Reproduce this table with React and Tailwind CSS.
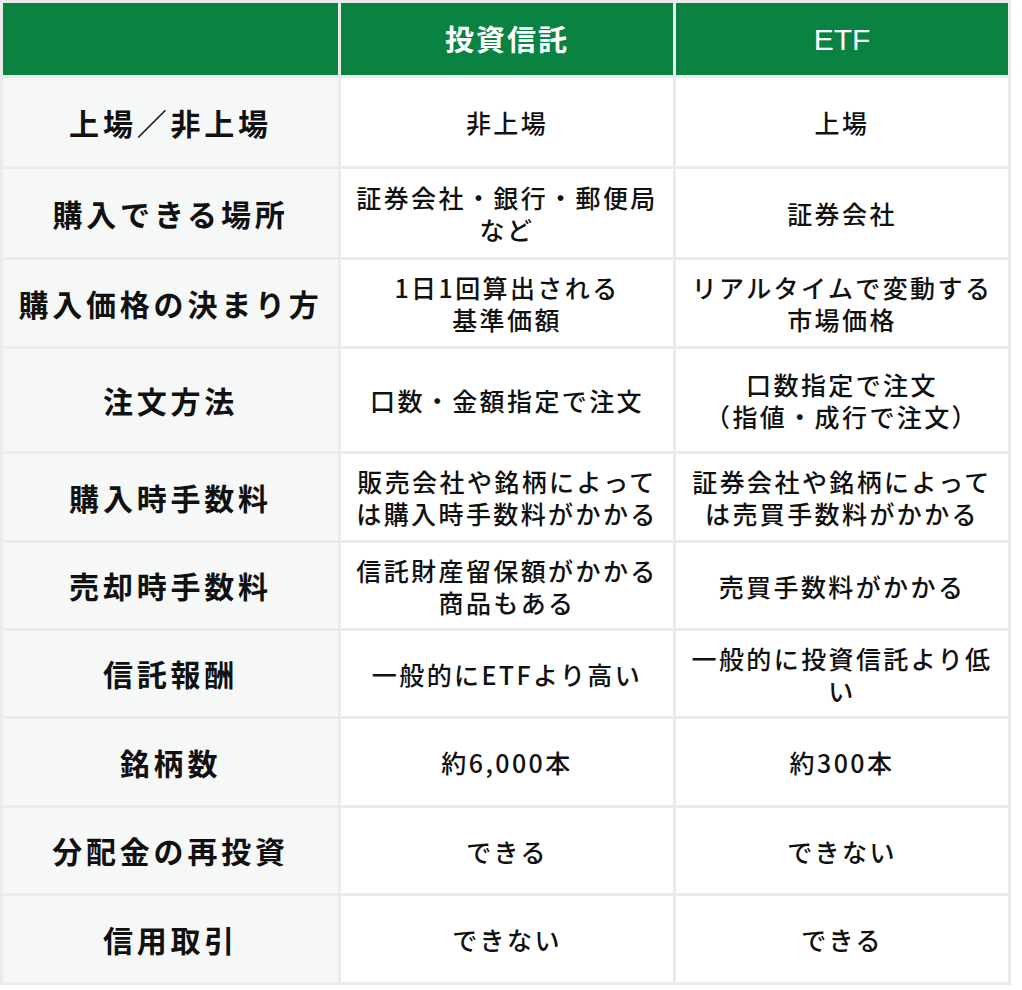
import React from "react";

const ROWS = [
  { label: "上場／非上場", a: ["非上場"], b: ["上場"], h: "h-[88px]" },
  { label: "購入できる場所", a: ["証券会社・銀行・郵便局", "など"], b: ["証券会社"], h: "h-[88px]" },
  { label: "購入価格の決まり方", a: ["1日1回算出される", "基準価額"], b: ["リアルタイムで変動する", "市場価格"], h: "h-[86px]" },
  { label: "注文方法", a: ["口数・金額指定で注文"], b: ["口数指定で注文", "（指値・成行で注文）"], h: "h-[102px]" },
  { label: "購入時手数料", a: ["販売会社や銘柄によって", "は購入時手数料がかかる"], b: ["証券会社や銘柄によって", "は売買手数料がかかる"], h: "h-[86px]" },
  { label: "売却時手数料", a: ["信託財産留保額がかかる", "商品もある"], b: ["売買手数料がかかる"], h: "h-[85px]" },
  { label: "信託報酬", a: ["一般的にETFより高い"], b: ["一般的に投資信託より低", "い"], h: "h-[85px]" },
  { label: "銘柄数", a: ["約6,000本"], b: ["約300本"], h: "h-[86px]" },
  { label: "分配金の再投資", a: ["できる"], b: ["できない"], h: "h-[85px]" },
  { label: "信用取引", a: ["できない"], b: ["できる"], h: "h-[86px]" },
];

const font = "font-['Noto_Sans_CJK_JP','Noto_Sans_CJK_SC',sans-serif]";

function Cell({ lines }) {
  return (
    <div className="bg-white flex flex-col items-center justify-center text-[25px] leading-[32px] tracking-[2.4px] font-medium text-[#111] whitespace-nowrap">
      {lines.map((l, i) => (
        <span key={i}>{l}</span>
      ))}
    </div>
  );
}

export default function App() {
  return (
    <div className={`bg-white w-[1022px] h-[990px] ${font}`}>
      <div className="w-[1011px] bg-[#ebebeb] p-[3px] grid grid-cols-[335px_332px_332px] gap-[3px]">
        <div className="h-[72px] bg-[#0a8242]" />
        <div className="h-[72px] bg-[#0a8242] flex items-center justify-center text-white text-[29px] font-bold tracking-[2px]">
          投資信託
        </div>
        <div className="h-[72px] bg-[#0a8242] flex items-center justify-center text-white text-[30px] font-['Liberation_Sans',sans-serif]">
          ETF
        </div>
        {ROWS.map((r) => (
          <React.Fragment key={r.label}>
            <div className={`${r.h} bg-[#f6f7f7] flex items-center justify-center text-[30px] font-semibold tracking-[3.8px] text-[#111] whitespace-nowrap`}>
              {r.label}
            </div>
            <Cell lines={r.a} />
            <Cell lines={r.b} />
          </React.Fragment>
        ))}
      </div>
    </div>
  );
}
